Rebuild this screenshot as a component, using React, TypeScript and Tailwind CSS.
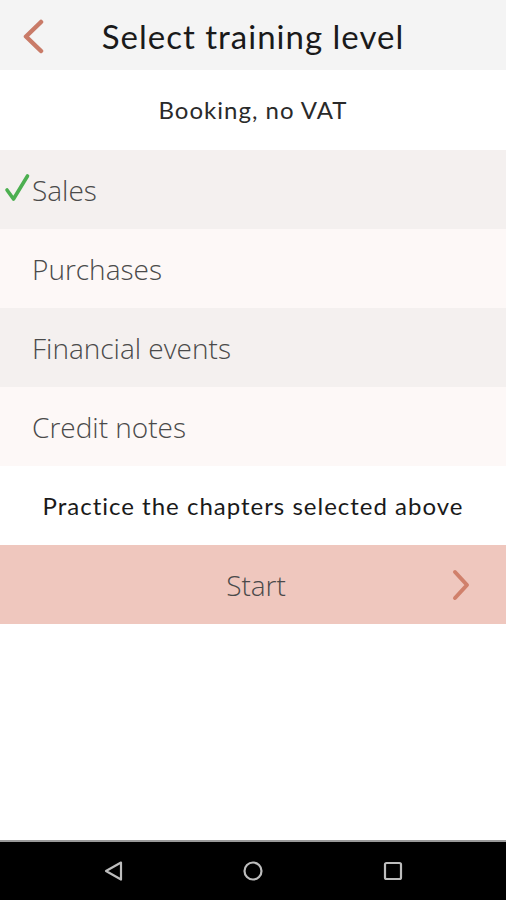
const chapters = [
  { name: "Sales", checked: true },
  { name: "Purchases", checked: false },
  { name: "Financial events", checked: false },
  { name: "Credit notes", checked: false },
];

export default function App() {
  return (
    <div className="flex h-[900px] w-[506px] flex-col bg-white">
      {/* header */}
      <div className="relative flex h-[70px] items-center justify-center bg-[#f4f4f4]">
        <svg
          className="absolute left-[21px] top-[19px]"
          width="24"
          height="35"
          viewBox="0 0 24 35"
          fill="none"
          aria-hidden="true"
        >
          <path
            d="M20 3 L5 17.5 L20 32"
            stroke="#c97b68"
            strokeWidth="4.5"
            strokeLinecap="round"
            strokeLinejoin="round"
          />
        </svg>
        <h1 className="pt-[2px] font-['Lato',sans-serif] text-[33px] leading-none tracking-[1px] text-[#1a1a1a]">
          Select training level
        </h1>
      </div>

      <div className="flex h-[80px] items-center justify-center font-['Lato',sans-serif] text-[24px] tracking-[1px] text-[#2a2a2a]">
        Booking, no VAT
      </div>

      {/* chapters */}
      {chapters.map((c, i) => (
        <div
          key={c.name}
          className={
            "relative flex h-[79px] items-center pl-[32px] font-['Open_Sans',sans-serif] text-[28px] font-light text-[#4a4a4a] " +
            (i % 2 === 0 ? "bg-[#f4f0ef]" : "bg-[#fdf8f7]")
          }
        >
          {c.checked && (
            <svg
              className="absolute left-[4px] top-[23px]"
              width="26"
              height="30"
              viewBox="0 0 26 30"
              fill="none"
              aria-hidden="true"
            >
              <path
                d="M3 17 L9.5 26 L23.5 3"
                stroke="#4caf50"
                strokeWidth="3.6"
                strokeLinecap="round"
                strokeLinejoin="round"
              />
            </svg>
          )}
          {c.name}
        </div>
      ))}

      <div className="flex h-[79px] items-center justify-center font-['Lato',sans-serif] text-[24px] tracking-[1px] text-[#1a1a1a]">
        Practice the chapters selected above
      </div>

      <button className="relative flex h-[79px] items-center justify-center bg-[#efc7be] pl-[6px] font-['Open_Sans',sans-serif] text-[28px] font-light text-[#4a4a4a]">
        Start
        <svg
          className="absolute left-[449px] top-[24px]"
          width="24"
          height="32"
          viewBox="0 0 24 32"
          fill="none"
          aria-hidden="true"
        >
          <path
            d="M6 3 L18 16 L6 29"
            stroke="#d0806b"
            strokeWidth="4"
            strokeLinecap="round"
            strokeLinejoin="round"
          />
        </svg>
      </button>

      <div className="flex-1" />

      {/* android nav */}
      <div className="h-[2px] bg-[#9a9a9a]" />
      <div className="flex h-[58px] items-center bg-black">
        <div className="flex w-full items-center justify-between px-[102px]">
          <svg width="22" height="22" viewBox="0 0 22 22" fill="none" aria-hidden="true">
            <path d="M19 2.5 L4 11 L19 19.5 Z" stroke="#bdbdbd" strokeWidth="2.2" strokeLinejoin="round" />
          </svg>
          <svg width="22" height="22" viewBox="0 0 22 22" fill="none" aria-hidden="true">
            <circle cx="11" cy="11" r="8.5" stroke="#bdbdbd" strokeWidth="2.2" />
          </svg>
          <svg width="22" height="22" viewBox="0 0 22 22" fill="none" aria-hidden="true">
            <rect x="3" y="3" width="16" height="16" rx="1.5" stroke="#bdbdbd" strokeWidth="2.2" />
          </svg>
        </div>
      </div>
    </div>
  );
}
